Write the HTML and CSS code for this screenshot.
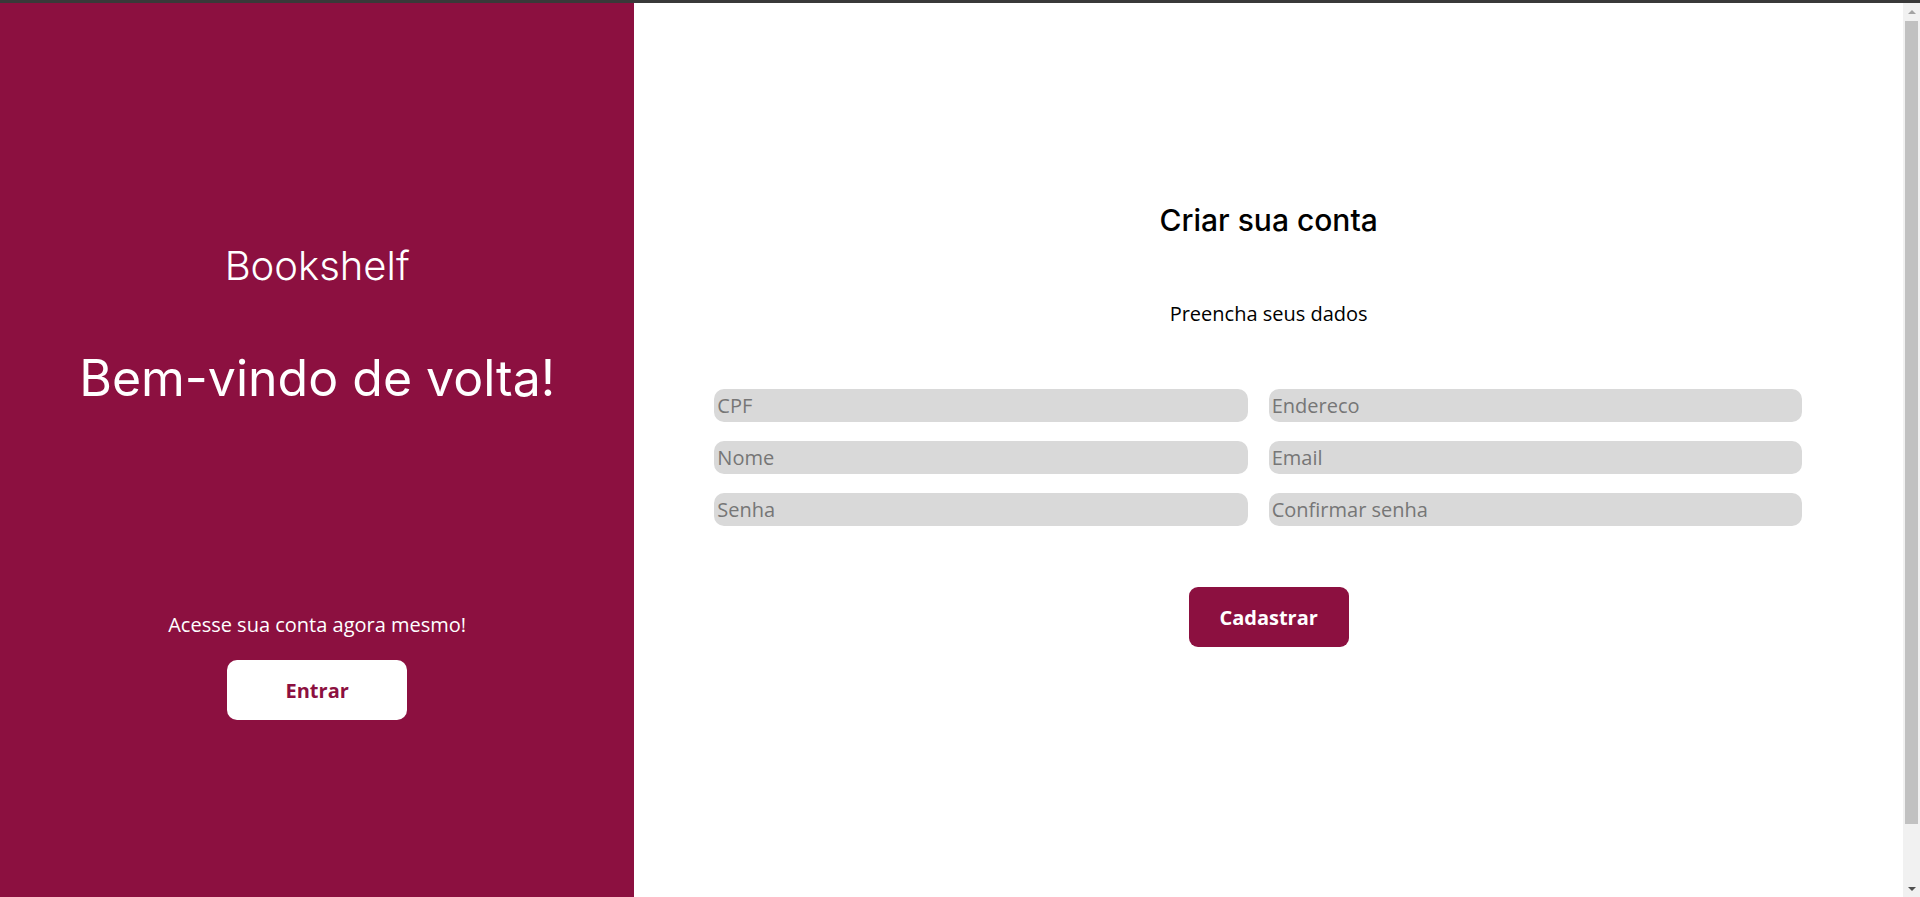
FILE: index.html
```html
<!DOCTYPE html>
<html lang="pt-BR">
<head>
<meta charset="utf-8">
<title>Bookshelf - Criar conta</title>
<link rel="stylesheet" href="styles.css">
</head>
<body>
<div class="page">
  <aside class="welcome">
    <h2 class="brand">Bookshelf</h2>
    <h1 class="welcome-title">Bem-vindo de volta!</h1>
    <p class="welcome-text">Acesse sua conta agora mesmo!</p>
    <button class="btn btn-light" type="button">Entrar</button>
  </aside>
  <main class="signup">
    <h2 class="signup-title">Criar sua conta</h2>
    <p class="signup-text">Preencha seus dados</p>
    <form class="signup-form">
      <div class="fields">
        <input class="field" type="text" placeholder="CPF">
        <input class="field" type="text" placeholder="Endereco">
        <input class="field" type="text" placeholder="Nome">
        <input class="field" type="email" placeholder="Email">
        <input class="field" type="password" placeholder="Senha">
        <input class="field" type="password" placeholder="Confirmar senha">
      </div>
      <button class="btn btn-dark" type="button">Cadastrar</button>
    </form>
  </main>
</div>
<div class="scrollbar" aria-hidden="true">
  <div class="sb-btn"><span class="sb-arrow-up"></span></div>
  <div class="sb-track"><div class="sb-thumb"></div></div>
  <div class="sb-btn"><span class="sb-arrow-down"></span></div>
</div>
</body>
</html>
```
FILE: styles.css
```css
html, body {
  margin: 0;
  padding: 0;
}
body {
  border-top: 3px solid #393939;
  font-family: "Open Sans", "Liberation Sans", sans-serif;
  background: #ffffff;
  overflow: hidden;
}
.page {
  display: flex;
  height: calc(100vh - 3px);
  margin-right: 17px;
}
.welcome {
  flex: 1 1 0;
  background: #8c1040;
  color: #ffffff;
  display: flex;
  flex-direction: column;
  align-items: center;
  text-align: center;
  padding-top: 239px;
}
.brand {
  margin: 0;
  font-family: Inter, "Open Sans", sans-serif;
  font-weight: 300;
  font-size: 40px;
  line-height: 48px;
}
.welcome-title {
  margin: 58px 0 0;
  font-family: Inter, "Open Sans", sans-serif;
  font-weight: 400;
  font-size: 50px;
  line-height: 60px;
}
.welcome-text {
  margin: 203px 0 0;
  font-size: 20px;
  line-height: 27px;
}
.btn {
  font-family: "Open Sans", "Liberation Sans", sans-serif;
  font-weight: 700;
  font-size: 20px;
  height: 60px;
  border: none;
  cursor: pointer;
}
.btn-light {
  margin-top: 22px;
  width: 180px;
  background: #ffffff;
  color: #8c1040;
  border-radius: 10px;
}
.btn-dark {
  margin-top: 61px;
  width: 160px;
  background: #8c1040;
  color: #ffffff;
  border-radius: 9px;
}
.signup {
  flex: 2 1 0;
  display: flex;
  flex-direction: column;
  align-items: center;
  text-align: center;
  padding-top: 199px;
}
.signup-title {
  margin: 0;
  font-family: Inter, "Open Sans", sans-serif;
  font-weight: 500;
  font-size: 30px;
  line-height: 36px;
  color: #000000;
}
.signup-text {
  margin: 62px 0 0;
  font-size: 20px;
  line-height: 27px;
  color: #000000;
}
.signup-form {
  align-self: stretch;
  display: flex;
  flex-direction: column;
  align-items: center;
  margin-top: 62px;
}
.fields {
  align-self: stretch;
  display: grid;
  grid-template-columns: 1fr 1fr;
  column-gap: 21px;
  row-gap: 19px;
  padding: 0 101px 0 80px;
}
.field {
  height: 33px;
  box-sizing: border-box;
  border: none;
  border-radius: 10px;
  background: #d9d9d9;
  padding: 0 3px;
  font-family: "Open Sans", "Liberation Sans", sans-serif;
  font-size: 20px;
  color: #333333;
  outline: none;
}
.field::placeholder {
  color: #767676;
}

/* fake classic scrollbar */
.scrollbar {
  position: fixed;
  top: 3px;
  right: 0;
  bottom: 0;
  width: 17px;
  background: #f1f1f1;
  display: flex;
  flex-direction: column;
}
.sb-btn {
  height: 17px;
  display: flex;
  align-items: center;
  justify-content: center;
}
.sb-arrow-up {
  width: 0;
  height: 0;
  border-left: 4px solid transparent;
  border-right: 4px solid transparent;
  border-bottom: 4px solid #a3a3a3;
}
.sb-arrow-down {
  width: 0;
  height: 0;
  border-left: 4px solid transparent;
  border-right: 4px solid transparent;
  border-top: 4px solid #505050;
}
.sb-track {
  flex: 1 1 auto;
  padding: 1px 2px 0;
}
.sb-thumb {
  height: 803px;
  background: #c1c1c1;
}
```
